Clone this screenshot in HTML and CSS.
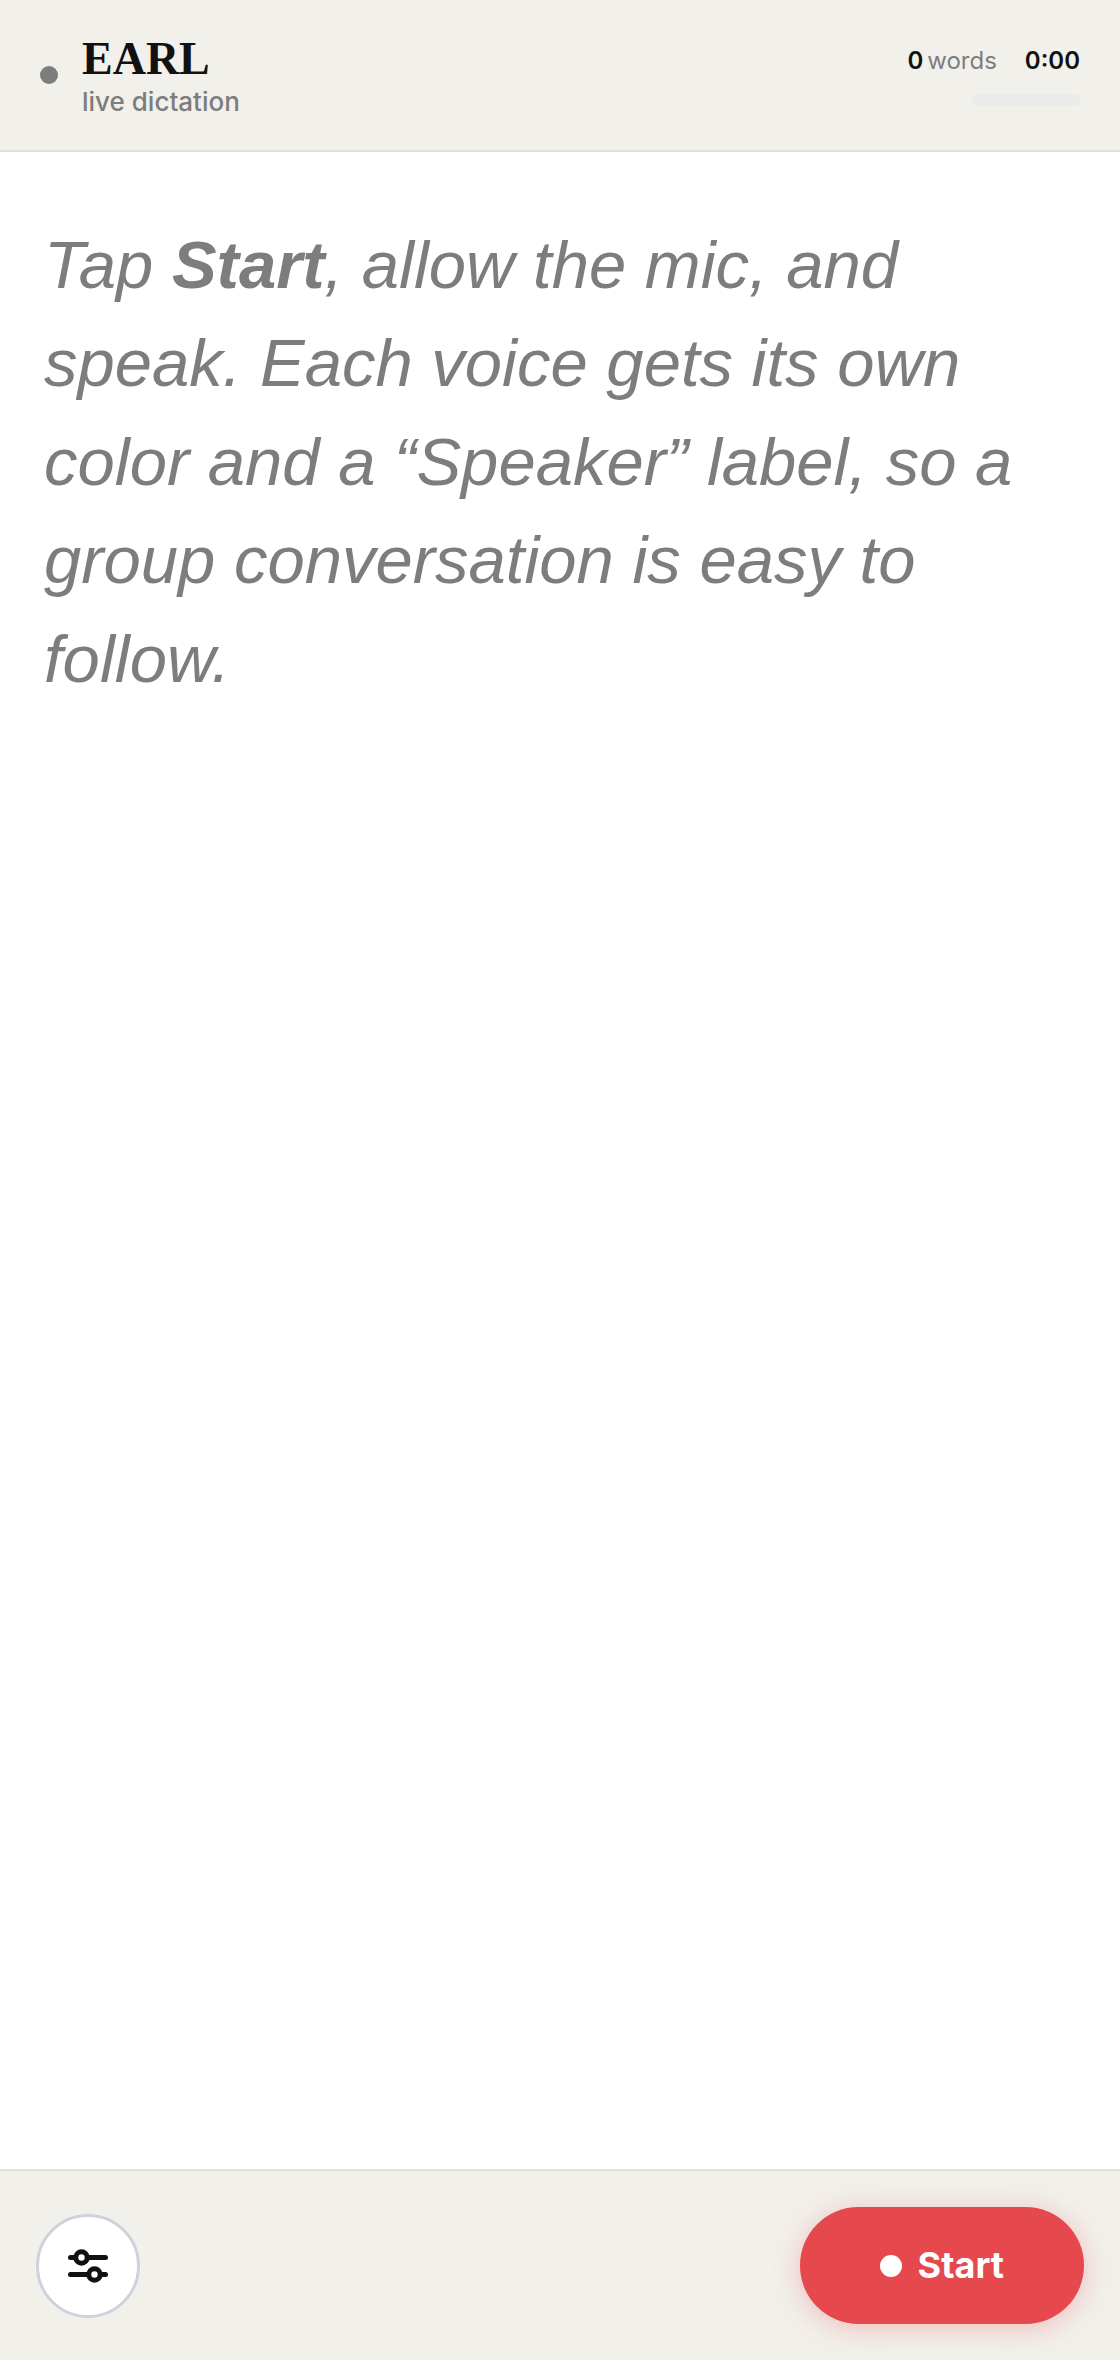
FILE: index.html
```html
<!DOCTYPE html>
<html lang="en">
<head>
  <meta charset="UTF-8" />
  <meta name="viewport" content="width=device-width, initial-scale=1.0"/>
  <title>EARL - live dictation</title>
  <link rel="stylesheet" href="styles.css">
</head>
<body>
  <header class="top-bar">
    <div class="brand">
      <span class="status-dot"></span>
      <div class="brand-text">
        <h1>EARL</h1>
        <p>live dictation</p>
      </div>
    </div>
    <div class="stats">
      <div class="stats-row">
        <span class="stat"><b>0</b><span>words</span></span>
        <span class="stat"><b>0:00</b></span>
      </div>
      <div class="meter"></div>
    </div>
  </header>

  <main class="transcript">
    <p class="hint">Tap <strong>Start</strong>, allow the mic, and speak. Each voice gets its own color and a “Speaker” label, so a group conversation is easy to follow.</p>
  </main>

  <footer class="controls">
    <button class="settings-btn" type="button" aria-label="Settings">
      <svg viewBox="0 0 52 52" fill="none" stroke="currentColor" stroke-width="5" stroke-linecap="round">
        <path d="M8.5 17.5H13M26 17.5H43.5M8.5 34.5H26M39 34.5H43.5"/>
        <circle cx="19.5" cy="17.5" r="5.7"/>
        <circle cx="32.5" cy="34.5" r="5.7"/>
      </svg>
    </button>
    <button class="start-btn" type="button"><span class="rec-dot"></span>Start</button>
  </footer>
</body>
</html>
```
FILE: styles.css
```css
* {
  box-sizing: border-box;
  margin: 0;
  padding: 0;
}

body {
  display: flex;
  flex-direction: column;
  min-height: 100vh;
  background: #fff;
  color: #111;
  font-family: Inter, sans-serif;
}

.top-bar {
  display: flex;
  justify-content: space-between;
  align-items: center;
  padding: 32px 40px;
  background: #f2f0eb;
  border-bottom: 2px solid #e4dfd6;
}

.brand {
  display: flex;
  align-items: center;
  gap: 24px;
}

.status-dot {
  width: 18px;
  height: 18px;
  border-radius: 50%;
  background: #7d7d7d;
}

.brand-text h1 {
  font-family: "Liberation Serif", serif;
  font-size: 46px;
  line-height: 54px;
}

.brand-text p {
  color: #7d7d7d;
  font-size: 26px;
  font-weight: 500;
  line-height: 32px;
}

.stats {
  display: flex;
  flex-direction: column;
  align-items: flex-end;
  gap: 16px;
}

.stats-row {
  display: flex;
  gap: 28px;
  font-size: 24px;
  line-height: 34px;
}

.stat {
  display: flex;
  gap: 4px;
  color: #7d7d7d;
}

.stat b {
  color: #111;
  font-weight: 600;
}

.meter {
  width: 108px;
  height: 12px;
  border-radius: 6px;
  background: #ebebeb;
}

.transcript {
  flex: 1;
  padding: 64px 44px;
}

.hint {
  color: #7d7d7d;
  font-family: "Liberation Sans", sans-serif;
  font-size: 67px;
  font-style: italic;
  line-height: 1.47;
}

.controls {
  display: flex;
  justify-content: space-between;
  align-items: center;
  padding: 36px;
  background: #f2f0eb;
  border-top: 2px solid #e4dfd6;
}

.settings-btn {
  display: flex;
  align-items: center;
  justify-content: center;
  width: 104px;
  height: 104px;
  border: 3px solid #cdd2dd;
  border-radius: 50%;
  background: #fff;
  color: #111;
  cursor: pointer;
}

.settings-btn svg {
  width: 52px;
  height: 52px;
}

.start-btn {
  display: flex;
  align-items: center;
  gap: 16px;
  padding: 36px 80px;
  border: none;
  border-radius: 60px;
  background: #e5484d;
  box-shadow: 0 4px 28px rgba(229, 72, 77, 0.3);
  color: #fff;
  font-family: inherit;
  font-size: 36px;
  font-weight: 700;
  line-height: 45px;
  cursor: pointer;
}

.rec-dot {
  width: 22px;
  height: 22px;
  border-radius: 50%;
  background: #fff;
}
```
